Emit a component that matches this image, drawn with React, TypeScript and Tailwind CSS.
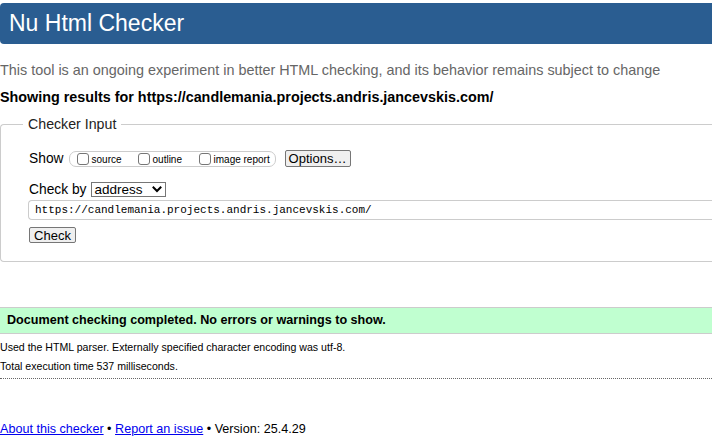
import React from 'react';

function CheckOption({ label, width }: { label: string; width: string }) {
  return (
    <label className={`flex shrink-0 items-center whitespace-nowrap ${width}`}>
      <span className="mr-[3px] h-[12px] w-[12px] shrink-0 rounded-[3px] border border-[#767676] bg-white" />
      <span className="mt-[3px] text-[10px] leading-none">{label}</span>
    </label>
  );
}

export default function App() {
  return (
    <div className="h-[442px] w-[712px] overflow-hidden bg-white font-['Liberation_Sans',Arial,sans-serif] text-black">
      <div className="w-[760px]">
        {/* Title bar */}
        <h1 className="mt-[3px] flex h-[41px] items-center rounded-l-[4px] bg-[#2a5d91] pl-[9px] text-[23px] leading-none text-white">
          Nu Html Checker
        </h1>

        <p className="mt-[18px] text-[14.4px] leading-[16px] text-[#666]">
          This tool is an ongoing experiment in better HTML checking, and its behavior remains subject to change
        </p>
        <p className="mt-[11px] text-[14.35px] font-bold leading-[16px]">
          Showing results for https://candlemania.projects.andris.jancevskis.com/
        </p>

        {/* Checker input fieldset */}
        <div className="relative mt-[19px] h-[138px] rounded-l-[4px] border-y border-l border-[#ccc] pl-[28px]">
          <div className="absolute -top-[9px] left-[22px] bg-white px-[5px] text-[14.2px] leading-[17px] text-[#222]">
            Checker Input
          </div>

          <div className="mt-[25px] flex items-center">
            <span className="text-[13.8px] leading-[17px]">Show</span>
            <div className="ml-[5px] flex h-[16px] w-[207px] items-center rounded-[7px] border border-[#ccc] pl-[7px]">
              <CheckOption label="source" width="w-[61px]" />
              <CheckOption label="outline" width="w-[61px]" />
              <CheckOption label="image report" width="w-[76px]" />
            </div>
            <button className="ml-[9px] h-[17px] w-[66px] rounded-[2px] border border-[#767676] bg-[#efefef] text-[13px] leading-none">
              Options…
            </button>
          </div>

          <div className="mt-[14px] flex items-center">
            <span className="text-[13.8px] leading-[17px]">Check by</span>
            <div className="ml-[4px] flex h-[15px] w-[75px] items-center justify-between border border-[#767676] bg-white pl-[3px] pr-[3px] text-[13.5px] leading-none">
              <span>address</span>
              <svg width="10" height="7" viewBox="0 0 10 7" fill="none">
                <path d="M1.5 1.5 5 5l3.5-3.5" stroke="#000" strokeWidth="2" strokeLinecap="square" />
              </svg>
            </div>
          </div>

          <div className="mt-[2px] -ml-[1px] flex h-[20px] items-center rounded-l-[4px] border-y border-l border-[#ccc] pl-[6px] font-['Liberation_Mono',monospace] text-[11px] leading-none">
            https://candlemania.projects.andris.jancevskis.com/
          </div>

          <button className="mt-[7px] h-[16px] w-[47px] rounded-[2px] border border-[#767676] bg-[#efefef] text-[13px] leading-none">
            Check
          </button>
        </div>

        {/* Result */}
        <div className="mt-[45px] flex h-[27px] items-center border-y border-[#ccc] bg-[#c0ffd0] pl-[7px] text-[12.6px] font-bold leading-none">
          Document checking completed. No errors or warnings to show.
        </div>
        <p className="mt-[7px] text-[10.6px] leading-[13px]">
          Used the HTML parser. Externally specified character encoding was utf-8.
        </p>
        <p className="mt-[6px] text-[10.6px] leading-[13px]">Total execution time 537 milliseconds.</p>
        <div className="mt-[5px] w-[712px] border-b border-dotted border-[#666]" />

        {/* Footer */}
        <p className="mt-[42px] text-[12.6px] leading-[16px]">
          <a className="text-[#0000ee] underline" href="#">About this checker</a>
          {' • '}
          <a className="text-[#0000ee] underline" href="#">Report an issue</a>
          {' • Version: 25.4.29'}
        </p>
      </div>
    </div>
  );
}
